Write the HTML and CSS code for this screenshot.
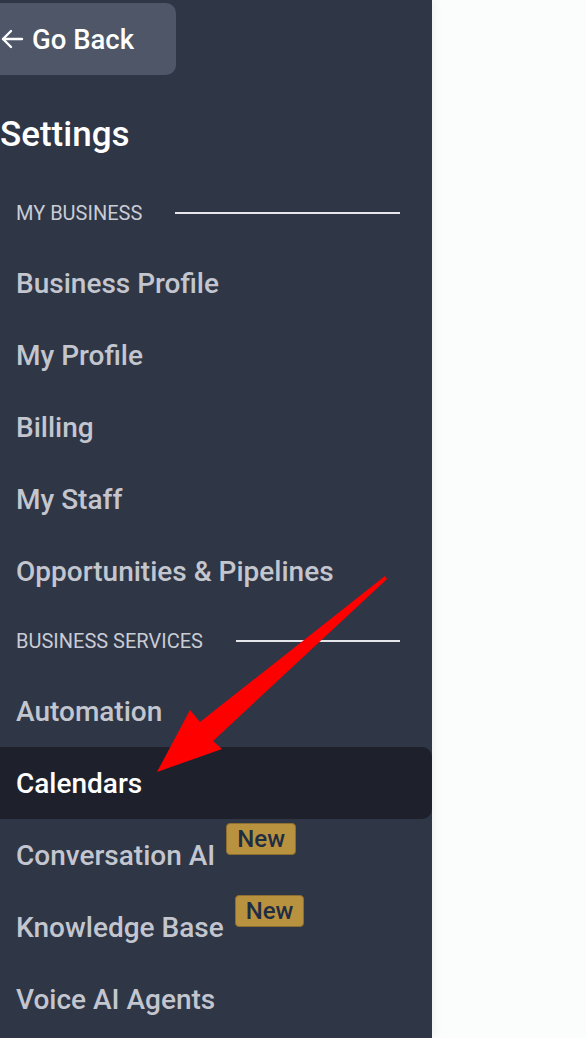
FILE: index.html
```html
<!DOCTYPE html>
<html lang="en">
<head>
<meta charset="utf-8">
<title>Settings</title>
<link rel="stylesheet" href="styles.css">
</head>
<body>
<div class="app">
  <aside class="sidebar">
    <button class="back-btn">
      <svg class="back-icon" viewBox="0 0 24 24" width="24" height="24" fill="none" stroke="currentColor" stroke-width="2.4" stroke-linecap="round" stroke-linejoin="round"><path d="M22 12H3"/><path d="M11 4l-8 8 8 8"/></svg>
      <span>Go Back</span>
    </button>
    <h1 class="title">Settings</h1>
    <div class="section-head"><span>My Business</span><i class="rule"></i></div>
    <a class="nav-item">Business Profile</a>
    <a class="nav-item">My Profile</a>
    <a class="nav-item">Billing</a>
    <a class="nav-item">My Staff</a>
    <a class="nav-item">Opportunities &amp; Pipelines</a>
    <div class="section-head services"><span>Business Services</span><i class="rule"></i></div>
    <a class="nav-item">Automation</a>
    <a class="nav-item active">Calendars</a>
    <a class="nav-item">Conversation AI <span class="badge">New</span></a>
    <a class="nav-item">Knowledge Base <span class="badge">New</span></a>
    <a class="nav-item">Voice AI Agents</a>
  </aside>
  <main class="content"></main>
  <svg class="annot" viewBox="0 0 586 1038" width="586" height="1038">
    <polygon points="385,576 387,579 213,741 222,749 157,772 190,710 200,722" fill="#ff0000"/>
  </svg>
</div>
</body>
</html>
```
FILE: styles.css
```css
* { box-sizing: border-box; }
html, body { margin: 0; padding: 0; height: 100%; }
body {
  font-family: Roboto, "Noto Sans", "Liberation Sans", sans-serif;
  background: #fbfdfd;
  overflow: hidden;
}
.app {
  position: relative;
  display: flex;
  height: 1038px;
}
.sidebar {
  width: 432px;
  flex: 0 0 432px;
  background: #2f3646;
  display: flex;
  flex-direction: column;
  padding-top: 3px;
  box-shadow: 2px 0 10px rgba(0, 0, 0, 0.06);
  position: relative;
  z-index: 1;
}
.content { flex: 1; background: #fbfdfd; }
.back-btn {
  align-self: flex-start;
  height: 72px;
  width: 196px;
  margin-left: -20px;
  padding: 0 0 0 20px;
  border: 0;
  border-radius: 10px;
  background: #4e5668;
  color: #ffffff;
  display: flex;
  align-items: center;
  gap: 8px;
  font-family: inherit;
  font-size: 27.5px;
  font-weight: 500;
  cursor: pointer;
}
.back-icon { flex: 0 0 24px; }
.title {
  margin: 0;
  padding: 40px 0 24px 0;
  font-size: 35px;
  line-height: 40px;
  font-weight: 500;
  color: #ffffff;
}
.section-head {
  height: 68px;
  display: flex;
  align-items: center;
  padding: 0 32px 0 16px;
  gap: 33px;
  color: #c9ccd5;
  font-size: 20px;
  text-transform: uppercase;
}
.rule {
  flex: 1;
  height: 2px;
  background: #e4e6ea;
}
.nav-item {
  height: 72px;
  display: flex;
  align-items: center;
  padding-left: 16px;
  font-size: 28px;
  font-weight: 500;
  color: #c3c6ce;
  cursor: pointer;
}
.nav-item.active {
  background: #1e212b;
  color: #ffffff;
  border-radius: 0 10px 10px 0;
}
.badge {
  align-self: flex-start;
  margin: 4px 0 0 11px;
  padding: 0 10px;
  height: 32px;
  line-height: 30px;
  border: 1px solid #8c6f30;
  border-radius: 4px;
  background: #b9923f;
  color: #1f2d44;
  font-size: 24px;
  font-weight: 500;
}
.annot {
  position: absolute;
  left: 0;
  top: 0;
  z-index: 5;
  pointer-events: none;
}
```
